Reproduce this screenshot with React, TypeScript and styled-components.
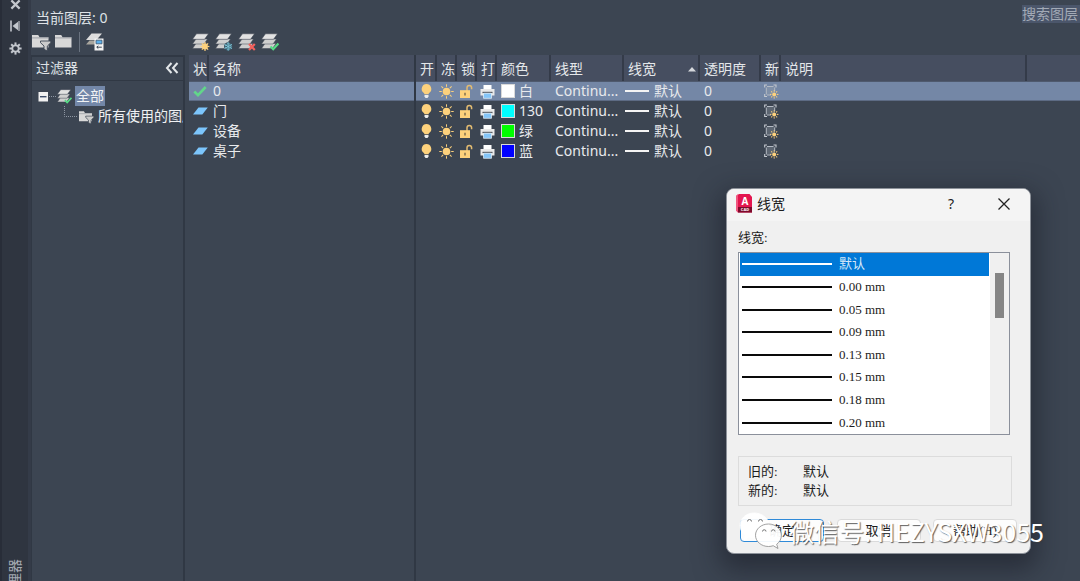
import React from "react";
import styled, { createGlobalStyle } from "styled-components";

const sans = `"Noto Sans", "Noto Sans CJK SC", sans-serif`;
const songti = `"Liberation Serif", "Noto Sans CJK SC", serif`;

const GlobalStyle = createGlobalStyle`
  *, *::before, *::after { box-sizing: border-box; }
  body { margin: 0; background: #3c4552; overflow: hidden; }
  button, input { font: inherit; }
  svg { flex-shrink: 0; }
`;

const Palette = styled.div`
  position: relative;
  display: flex;
  min-height: 100vh;
  background: #3c4552;
  color: #dfe2e6;
  font: 14px/20px ${sans};
`;

/* ---- Side rail ---- */

const Rail = styled.aside`
  display: flex;
  flex-direction: column;
  align-items: center;
  flex: 0 0 31px;
  border-left: 2px solid #282d38;
  border-right: 3px solid #343b48;
  background: #2f3540;
`;

const RailButton = styled.button`
  display: flex;
  align-items: center;
  justify-content: center;
  width: 22px;
  height: 22px;
  padding: 0;
  border: 0;
  background: none;
  color: #c3c7cd;
  &:first-child {
    height: 15px;
    padding-bottom: 6px;
  }
`;

const RailTitle = styled.div`
  height: 22px;
  margin-top: auto;
  overflow: hidden;
  color: #a4a9b2;
  line-height: 16px;
  span {
    display: block;
    width: 16px;
    writing-mode: vertical-rl;
    text-orientation: sideways;
    white-space: nowrap;
    transform: rotate(180deg);
  }
`;

/* ---- Top area ---- */

const Main = styled.main`
  display: flex;
  flex-direction: column;
  flex: 1;
  min-width: 0;
`;

const TopBar = styled.header`
  display: flex;
  justify-content: space-between;
  align-items: flex-start;
  height: 30px;
  padding: 5px 0 0 5px;
`;

const CurrentLayer = styled.h1`
  margin: 0;
  font-size: 14px;
  font-weight: 400;
  line-height: 26px;
`;

const Search = styled.input`
  width: 58px;
  height: 18px;
  padding: 0;
  border: 0;
  background: #4b566b;
  font-size: 14px;
  line-height: 18px;
  &::placeholder {
    color: #a3aab6;
    opacity: 1;
  }
`;

const Tools = styled.div`
  display: flex;
  align-items: center;
  height: 25px;
  padding-bottom: 2px;
`;

const ToolGroup = styled.div<{ $width?: number }>`
  display: flex;
  align-items: center;
  flex: 0 0 ${(p) => (p.$width ? `${p.$width}px` : "auto")};
`;

const ToolButton = styled.button`
  display: flex;
  align-items: center;
  padding: 0 0 0 1px;
  width: 23px;
  height: 23px;
  border: 0;
  background: none;
`;

const ToolDivider = styled.i`
  width: 1px;
  height: 20px;
  margin: 0 4px 0 2px;
  background: #6a7380;
`;

/* ---- Filter tree ---- */

const Panes = styled.div`
  display: flex;
  flex: 1;
  min-height: 0;
`;

const FilterPane = styled.section`
  flex: 0 0 154px;
  margin-right: 4px;
  border: solid #303844;
  border-width: 2px 2px 0 1px;
  overflow: hidden;
`;

const FilterHead = styled.div`
  display: flex;
  align-items: center;
  justify-content: space-between;
  height: 24px;
  padding: 0 4px 1px;
  border-bottom: 1px solid #303844;
`;

const Collapse = styled.button`
  display: flex;
  padding: 0;
  border: 0;
  background: none;
`;

const Tree = styled.ul`
  margin: 0;
  padding: 5px 0 0 6px;
  list-style: none;
`;

const TreeItem = styled.li<{ $depth: number }>`
  display: flex;
  align-items: center;
  height: 20px;
  padding-left: ${(p) => p.$depth * 26}px;
  white-space: nowrap;
`;

const TreeLabel = styled.span<{ $selected?: boolean }>`
  margin-left: 3px;
  padding: 0 1px;
  background: ${(p) => (p.$selected ? "#7387a8" : "none")};
  color: #f0f2f4;
`;

/* ---- Layer tables ---- */

const TablePane = styled.section<{ $width?: number }>`
  flex: ${(p) => (p.$width ? `0 0 ${p.$width}px` : "1 1 0")};
  min-width: 0;
  border-right: ${(p) => (p.$width ? "2px solid #303844" : "0")};
`;

const Table = styled.table`
  width: 100%;
  table-layout: fixed;
  border-collapse: separate;
  border-spacing: 0;
`;

const Th = styled.th<{ $last?: boolean }>`
  height: 26px;
  padding: 1px 0 0 4px;
  border-right: ${(p) => (p.$last ? "0" : "2px solid #343b49")};
  background: #464e60;
  color: #e4e7ea;
  font-weight: 400;
  text-align: left;
  white-space: nowrap;
  overflow: hidden;
`;

const ThLine = styled.span`
  display: flex;
  align-items: center;
  justify-content: space-between;
`;

const Row = styled.tr<{ $selected?: boolean }>`
  background: ${(p) => (p.$selected ? "#7487a6" : "transparent")};
  color: #e8eaed;
  box-shadow: ${(p) => (p.$selected ? "inset 0 1px #4f5a6e, inset 0 -1px #5d6b84" : "none")};
`;

const Td = styled.td<{ $pad?: number }>`
  height: 20px;
  padding: 0 0 0 ${(p) => p.$pad ?? 4}px;
  white-space: nowrap;
  line-height: 20px;
  svg {
    display: block;
  }
`;

const Inline = styled.span<{ $gap: number }>`
  display: flex;
  align-items: center;
  gap: ${(p) => p.$gap}px;
`;

const Swatch = styled.i<{ $color: string }>`
  width: 14px;
  height: 14px;
  border: 1px solid #d9d9d9;
  background: ${(p) => p.$color};
`;

const WeightLine = styled.i`
  width: 24px;
  height: 2px;
  background: #f4f4f4;
`;

/* ---- Dialog ---- */

const Dialog = styled.div`
  position: absolute;
  top: 188px;
  right: 49px;
  width: 305px;
  border: 1px solid #8d929a;
  border-radius: 8px;
  background: #f0f0f0;
  box-shadow: 0 10px 26px 6px rgba(22, 24, 34, 0.5);
  color: #1c1c1c;
  font: 13px/20px ${songti};
`;

const DialogBar = styled.div`
  display: flex;
  align-items: center;
  height: 32px;
  padding: 0 18px 2px 9px;
  border-radius: 7px 7px 0 0;
  background: #f4f4f4;
  font: 14px/20px ${sans};
`;

const DialogTitle = styled.h2`
  margin: 0 auto 0 5px;
  font-size: 14px;
  font-weight: 400;
`;

const BarButton = styled.button`
  display: flex;
  align-items: center;
  justify-content: center;
  width: 16px;
  height: 20px;
  margin-left: 37px;
  padding: 0;
  border: 0;
  background: none;
  color: #222;
`;

const DialogBody = styled.div`
  padding: 7px 17px 11px 11px;
`;

const FieldLabel = styled.div`
  height: 24px;
`;

const ListFrame = styled.div`
  display: flex;
  width: 272px;
  height: 183px;
  border: 1px solid #8b909b;
  background: #fff;
`;

const List = styled.ul`
  display: grid;
  grid-template-rows: repeat(8, 1fr);
  flex: 1;
  margin: 0;
  padding: 0 1px;
  list-style: none;
`;

const Option = styled.li<{ $selected?: boolean }>`
  display: flex;
  align-items: center;
  gap: 7px;
  padding-left: 2px;
  background: ${(p) => (p.$selected ? "#0078d7" : "#fff")};
  color: ${(p) => (p.$selected ? "#d6e8f8" : "#1c1c1c")};
  &::before {
    content: "";
    width: 90px;
    height: 2px;
    background: ${(p) => (p.$selected ? "#fff" : "#0a0a0a")};
  }
`;

const Scrollbar = styled.div`
  width: 19px;
  padding: 20px 5px 0;
  background: #f0f0f0;
  &::before {
    content: "";
    display: block;
    height: 45px;
    background: #858585;
  }
`;

const Summary = styled.dl`
  display: grid;
  grid-template-columns: 55px 1fr;
  width: 274px;
  margin: 21px 0 13px;
  padding: 5px 9px;
  border: 1px solid #dcdcdc;
  line-height: 19px;
  dt, dd { margin: 0; }
`;

const Actions = styled.div`
  display: flex;
  justify-content: space-between;
  padding-left: 2px;
  margin-right: -4px;
`;

const Action = styled.button<{ $primary?: boolean }>`
  width: 84px;
  height: 23px;
  padding: 0;
  border: 1px solid ${(p) => (p.$primary ? "#2f8ad8" : "#dadada")};
  border-radius: 4px;
  background: #fdfdfd;
  color: #1c1c1c;
  line-height: 20px;
`;

const Watermark = styled.div`
  position: absolute;
  right: 36px;
  top: 511px;
  display: flex;
  align-items: center;
  gap: 7px;
  color: #fff;
  font: 25px/40px "Noto Sans CJK SC", sans-serif;
  text-shadow: 1px 1px 1px rgba(60, 60, 60, 0.8);
  white-space: nowrap;
  pointer-events: none;
`;

/* ---- Icons ---- */

const Stack = () => (
  <>
    <path d="M.5 15.5 4 10.5H15L11.5 15.500Z" fill="#cfcfcf" stroke="#3c4552" strokeWidth=".5" />
    <path d="M.5 11 4 6H15.500L12 11Z" fill="#cfcfcf" stroke="#3c4552" strokeWidth=".5" />
    <path d="M.5 6.300 4.500 .8H16.500L12.500 6.300Z" fill="#e2e2e2" stroke="#3c4552" strokeWidth=".5" />
  </>
);

const Rays = ({ cx, cy, r1, r2, w }: { cx: number; cy: number; r1: number; r2: number; w: number }) => (
  <g stroke="#fdd17c" strokeWidth={w}>
    {[0, 45, 90, 135, 180, 225, 270, 315].map((a) => (
      <path key={a} d={`M${cx + r1} ${cy}H${cx + r2}`} transform={`rotate(${a} ${cx} ${cy})`} />
    ))}
  </g>
);

const StackIcon = ({ badge, size = 18 }: { badge: "new" | "frozen" | "delete" | "check"; size?: number }) => (
  <svg width={size} height={size} viewBox="0 0 18 18">
    <Stack />
    {badge === "new" && (
      <>
        <circle cx="13" cy="13.5" r="2.9" fill="#fdd17c" />
        <Rays cx={13} cy={13.5} r1={2.5} r2={4.4} w={1.2} />
      </>
    )}
    {badge === "frozen" && (
      <>
        <circle cx="13.2" cy="13.5" r="4.2" fill="#3c5766" />
        <g stroke="#7cc5d8" strokeWidth="1" fill="none">
          <circle cx="13.2" cy="13.5" r="2.8" strokeDasharray="1.4 .9" />
          <path d="M13.2 9.3v8.400M9.5 11.4l7.400 4.200M16.9 11.4l-7.400 4.200" />
        </g>
      </>
    )}
    {badge === "delete" && <path d="M11 11 16.800 17M16.800 11 11 17" stroke="#f4625d" strokeWidth="2.2" />}
    {badge === "check" && <path d="M9.5 13.4 12.2 16.2 17.4 10.5" stroke="#57dc86" strokeWidth="2.1" fill="none" />}
  </svg>
);

const FolderIcon = ({ filter, size = 19 }: { filter?: boolean; size?: number }) => (
  <svg width={size} height={size} viewBox="0 0 19 19">
    <path d="M0 15.500V3H6.200L7.600 5.200H16.500V15.500Z" fill="#d8d8d8" />
    <path d="M0 5.900H16.500" stroke="#8d9299" strokeWidth=".8" />
    {filter && <path d="M8.500 9H18.800V10.700L15.300 14V19L12 17.300V14L8.500 10.700Z" fill="#cbcbcb" stroke="#3c4552" strokeWidth=".9" />}
  </svg>
);

const StateIcon = () => (
  <svg width="19" height="19" viewBox="0 0 19 19">
    <path d="M1 12.5 4.5 8.5H14L11 12.5Z" fill="#a9a69e" />
    <path d="M1 8 6.5 1.5H17L11.5 8Z" fill="#dedede" />
    <path d="M9.5 6.500H18.500V18.500H9.500Z" fill="#f4f4f4" />
    <path d="M11 8.200H17V11.800H11Z" fill="#5eb0ea" stroke="#3b566e" strokeWidth=".8" />
    <path d="M11.800 15.200H16.800M13.300 13.800 11.800 15.200 13.300 16.600" stroke="#3c4552" strokeWidth="1" fill="none" />
  </svg>
);

const BulbIcon = () => (
  <svg width="13" height="16" viewBox="0 0 13 16">
    <path d="M6.500 1A4.900 4.900 0 0 0 3.300 9.500C4 10.200 4.300 10.500 4.500 11.200H8.500C8.700 10.500 9 10.200 9.700 9.500A4.900 4.900 0 0 0 6.500 1Z" fill="#fdd17c" />
    <path d="M4.500 12H8.500V13.500L7.500 15H5.500L4.500 13.500Z" fill="#ededed" />
  </svg>
);

const SunIcon = () => (
  <svg width="15" height="15" viewBox="0 0 15 15">
    <circle cx="7.5" cy="7.5" r="3.8" fill="#fdd17c" />
    <Rays cx={7.5} cy={7.5} r1={4.7} r2={7.2} w={1} />
  </svg>
);

const LockIcon = () => (
  <svg width="14" height="15" viewBox="0 0 14 15">
    <path d="M8 7V3.800A2.300 2.300 0 0 1 12.600 3.800V5.200" stroke="#e2bb72" strokeWidth="1.5" fill="none" />
    <path d="M1 6.200H11V14H1Z" fill="#fdd17c" />
    <path d="M5.300 8.800H6.700V11.400H5.300Z" fill="#77684a" />
  </svg>
);

const PrinterIcon = () => (
  <svg width="15" height="15" viewBox="0 0 15 15">
    <path d="M3.500 1H11.500V5H3.500Z" fill="#fff" />
    <path d="M.5 5H14.500V11.500H.5Z" fill="#e9e9e9" />
    <path d="M2.500 7.800H12.500V9.200H2.500Z" fill="#4b4f57" />
    <path d="M3.500 9.200H11.500V14.300H3.500Z" fill="#84c5f8" stroke="#e9f3fb" strokeWidth=".7" />
  </svg>
);

const ViewportIcon = () => (
  <svg width="15" height="15" viewBox="0 0 15 15">
    <path d="M2.500 2.500H11V10.500H2.500Z" fill="#9aa3b0" fillOpacity=".35" />
    <path d="M.7 3.500V1H3M9.500 1H12V3.500M.7 10V12.500H3" stroke="#c4c8ce" strokeWidth="1.1" fill="none" />
    <path d="M3 2.500H9.500M10.700 3.500V7.500M2.300 3.500V10.500M3 11H7" stroke="#b4bac3" strokeWidth="1" fill="none" />
    <circle cx="10.200" cy="10.400" r="2" fill="#fdd17c" />
    <Rays cx={10.2} cy={10.4} r1={2.8} r2={4.2} w={1} />
  </svg>
);

const CheckIcon = () => (
  <svg width="14" height="13" viewBox="0 0 14 13">
    <path d="M1.300 6.500 5 10.200 12.700 2" stroke="#62d68a" strokeWidth="2.6" fill="none" />
  </svg>
);

const LayerIcon = () => (
  <svg width="15" height="10" viewBox="0 0 15 10">
    <path d="M0 8.500 5.500 1.500H14.800L9.300 8.500Z" fill="#7cc5fb" />
  </svg>
);

const AcadIcon = () => (
  <svg width="16" height="20" viewBox="0 0 16 20">
    <path d="M0 2 3 0H13.500L16 3V18.500H2L0 16.500Z" fill="#e3154e" />
    <path d="M0 2 2 0V18.500L0 16.500Z" fill="#f0567f" />
    <path d="M2 13H16V18.500H2Z" fill="#7d0a2b" />
    <text x="9" y="10.5" textAnchor="middle" fontFamily="Open Sans, sans-serif" fontSize="10" fontWeight="700" fill="#fff">A</text>
    <text x="9" y="17.3" textAnchor="middle" fontFamily="Open Sans, sans-serif" fontSize="4" fontWeight="700" fill="#fff">CAD</text>
  </svg>
);

const ChatLogo = () => (
  <svg width="43" height="38" viewBox="0 0 43 38">
    <g fill="#fff" fillOpacity=".94" stroke="#8a8a8a" strokeWidth=".8">
      <path d="M15 1C7 1 1 6.600 1 13.500C1 17.500 3 21 6.500 23.300L5 28 10.500 25C12 25.500 14 25.700 15.500 25.700A13 12.500 0 0 0 30 12C29 5.500 22.500 1 15 1Z" stroke="#fff" />
      <path d="M29.500 12C22.300 12 16.500 17 16.500 23.300C16.500 29.500 22.300 34.500 29.500 34.500C31.200 34.500 32.800 34.200 34.200 33.700L39 36.500 37.700 32.200C40.700 30 42.400 26.900 42.400 23.300C42.400 17 36.700 12 29.500 12Z" />
    </g>
    <g fill="#fff" stroke="#666" strokeWidth=".9">
      <path d="M8.500 9.500A2 2 0 0 1 12.500 9.500M19.500 9.500A2 2 0 0 1 23.500 9.500" />
      <path d="M23.500 19.500A1.700 1.700 0 0 1 27 19.500M32.500 19.500A1.700 1.700 0 0 1 36 19.500" />
    </g>
  </svg>
);

/* ---- Data ---- */

const layers = [
  { name: "0", color: "#ffffff", colorName: "白", current: true },
  { name: "门", color: "#00ffff", colorName: "130" },
  { name: "设备", color: "#00ff00", colorName: "绿" },
  { name: "桌子", color: "#0000ff", colorName: "蓝" },
];

const columns = [
  { title: "开", width: 21 },
  { title: "冻", width: 20 },
  { title: "锁", width: 20 },
  { title: "打", width: 20 },
  { title: "颜色", width: 54 },
  { title: "线型", width: 73 },
  { title: "线宽", width: 76, sorted: true },
  { title: "透明度", width: 61 },
  { title: "新", width: 20 },
  { title: "说明", width: 246 },
];

const weights = ["默认", "0.00 mm", "0.05 mm", "0.09 mm", "0.13 mm", "0.15 mm", "0.18 mm", "0.20 mm"];

export default function App() {
  return (
    <>
      <GlobalStyle />
      <Palette>
        <Rail>
          <RailButton aria-label="关闭">
            <svg width="11" height="11" viewBox="0 0 12 12">
              <path d="M1.500 1.500 10.500 10.500M10.500 1.500 1.500 10.500" stroke="currentColor" strokeWidth="2.400" />
            </svg>
          </RailButton>
          <RailButton aria-label="自动隐藏">
            <svg width="12" height="12" viewBox="0 0 12 12">
              <path d="M2 .5V11.500" stroke="currentColor" strokeWidth="1.600" />
              <path d="M3.500 6 9 1.800V10.200Z" fill="currentColor" />
              <path d="M10 1V11" stroke="currentColor" strokeWidth="1.200" />
            </svg>
          </RailButton>
          <RailButton aria-label="特性">
            <svg width="13" height="13" viewBox="0 0 13 13">
              <circle cx="6.500" cy="6.500" r="3.200" fill="none" stroke="currentColor" strokeWidth="1.800" />
              <g stroke="currentColor" strokeWidth="2">
                {[0, 45, 90, 135, 180, 225, 270, 315].map((a) => (
                  <path key={a} d="M10 6.500H12.600" transform={`rotate(${a} 6.500 6.500)`} />
                ))}
              </g>
            </svg>
          </RailButton>
          <RailTitle><span>图层特性管理器</span></RailTitle>
        </Rail>

        <Main>
          <TopBar>
            <CurrentLayer>当前图层: 0</CurrentLayer>
            <Search aria-label="搜索图层" placeholder="搜索图层" />
          </TopBar>
          <Tools>
            <ToolGroup $width={160}>
              <ToolButton aria-label="新建特性过滤器"><FolderIcon filter /></ToolButton>
              <ToolButton aria-label="新建组过滤器"><FolderIcon /></ToolButton>
              <ToolDivider />
              <ToolButton aria-label="图层状态管理器"><StateIcon /></ToolButton>
            </ToolGroup>
            <ToolGroup>
              <ToolButton aria-label="新建图层"><StackIcon badge="new" /></ToolButton>
              <ToolButton aria-label="新建冻结图层"><StackIcon badge="frozen" /></ToolButton>
              <ToolButton aria-label="删除图层"><StackIcon badge="delete" /></ToolButton>
              <ToolButton aria-label="置为当前"><StackIcon badge="check" /></ToolButton>
            </ToolGroup>
          </Tools>

          <Panes>
            <FilterPane>
              <FilterHead>
                <span>过滤器</span>
                <Collapse aria-label="折叠">
                  <svg width="14" height="12" viewBox="0 0 14 12">
                    <path d="M6.500 1 2 6 6.500 11M12.500 1 8 6 12.500 11" stroke="#e4e7ea" strokeWidth="2" fill="none" />
                  </svg>
                </Collapse>
              </FilterHead>
              <Tree>
                <TreeItem $depth={0}>
                  <svg width="19" height="20" viewBox="0 0 19 20">
                    <path d="M.5 6H10V15.500H.5Z" fill="#f1f1f1" />
                    <path d="M2 10.700H8.500" stroke="#3f4f6b" strokeWidth="1.400" />
                    <path d="M11 10.500H18" stroke="#8f97a3" strokeDasharray="1 1" />
                  </svg>
                  <StackIcon badge="check" size={15} />
                  <TreeLabel $selected>全部</TreeLabel>
                </TreeItem>
                <TreeItem $depth={1}>
                  <svg width="15" height="20" viewBox="0 0 15 20">
                    <path d="M.5 0V10.500H13" stroke="#8f97a3" strokeDasharray="1 1" fill="none" />
                  </svg>
                  <FolderIcon filter size={15} />
                  <TreeLabel>所有使用的图层</TreeLabel>
                </TreeItem>
              </Tree>
            </FilterPane>

            <TablePane $width={227}>
              <Table>
                <colgroup>
                  <col width={20} />
                  <col />
                </colgroup>
                <thead>
                  <tr>
                    <Th>状</Th>
                    <Th $last>名称</Th>
                  </tr>
                </thead>
                <tbody>
                  {layers.map((l) => (
                    <Row key={l.name} $selected={l.current}>
                      <Td>{l.current ? <CheckIcon /> : <LayerIcon />}</Td>
                      <Td>{l.name}</Td>
                    </Row>
                  ))}
                </tbody>
              </Table>
            </TablePane>

            <TablePane>
              <Table>
                <colgroup>
                  {columns.map((c) => <col key={c.title} width={c.width} />)}
                  <col />
                </colgroup>
                <thead>
                  <tr>
                    {columns.map((c) => (
                      <Th key={c.title}>
                        {c.sorted ? (
                          <ThLine>
                            {c.title}
                            <svg width="11" height="6" viewBox="0 0 11 6"><path d="M1 5.500 5 1 9 5.500Z" fill="#d5d8dc" /></svg>
                          </ThLine>
                        ) : c.title}
                      </Th>
                    ))}
                    <Th as="td" $last />
                  </tr>
                </thead>
                <tbody>
                  {layers.map((l) => (
                    <Row key={l.name} $selected={l.current}>
                      <Td><BulbIcon /></Td>
                      <Td $pad={2}><SunIcon /></Td>
                      <Td $pad={2}><LockIcon /></Td>
                      <Td $pad={3}><PrinterIcon /></Td>
                      <Td><Inline $gap={4}><Swatch $color={l.color} />{l.colorName}</Inline></Td>
                      <Td>Continu...</Td>
                      <Td $pad={1}><Inline $gap={5}><WeightLine />默认</Inline></Td>
                      <Td>0</Td>
                      <Td $pad={3}><ViewportIcon /></Td>
                      <Td />
                      <Td />
                    </Row>
                  ))}
                </tbody>
              </Table>
            </TablePane>
          </Panes>
        </Main>

        <Dialog role="dialog" aria-labelledby="weight-title">
          <DialogBar>
            <AcadIcon />
            <DialogTitle id="weight-title">线宽</DialogTitle>
            <BarButton aria-label="帮助">?</BarButton>
            <BarButton aria-label="关闭">
              <svg width="14" height="14" viewBox="0 0 14 14">
                <path d="M1.500 1.500 12.500 12.500M12.500 1.500 1.500 12.500" stroke="#222" strokeWidth="1.300" />
              </svg>
            </BarButton>
          </DialogBar>
          <DialogBody>
            <FieldLabel id="weight-label">线宽:</FieldLabel>
            <ListFrame>
              <List role="listbox" aria-labelledby="weight-label">
                {weights.map((w, i) => (
                  <Option key={w} role="option" aria-selected={i === 0} $selected={i === 0}>{w}</Option>
                ))}
              </List>
              <Scrollbar />
            </ListFrame>
            <Summary>
              <dt>旧的:</dt>
              <dd>默认</dd>
              <dt>新的:</dt>
              <dd>默认</dd>
            </Summary>
            <Actions>
              <Action $primary>确定</Action>
              <Action>取消</Action>
              <Action>帮助(H)</Action>
            </Actions>
          </DialogBody>
        </Dialog>

        <Watermark>
          <ChatLogo />
          微信号: HEZYSXW3055
        </Watermark>
      </Palette>
    </>
  );
}
